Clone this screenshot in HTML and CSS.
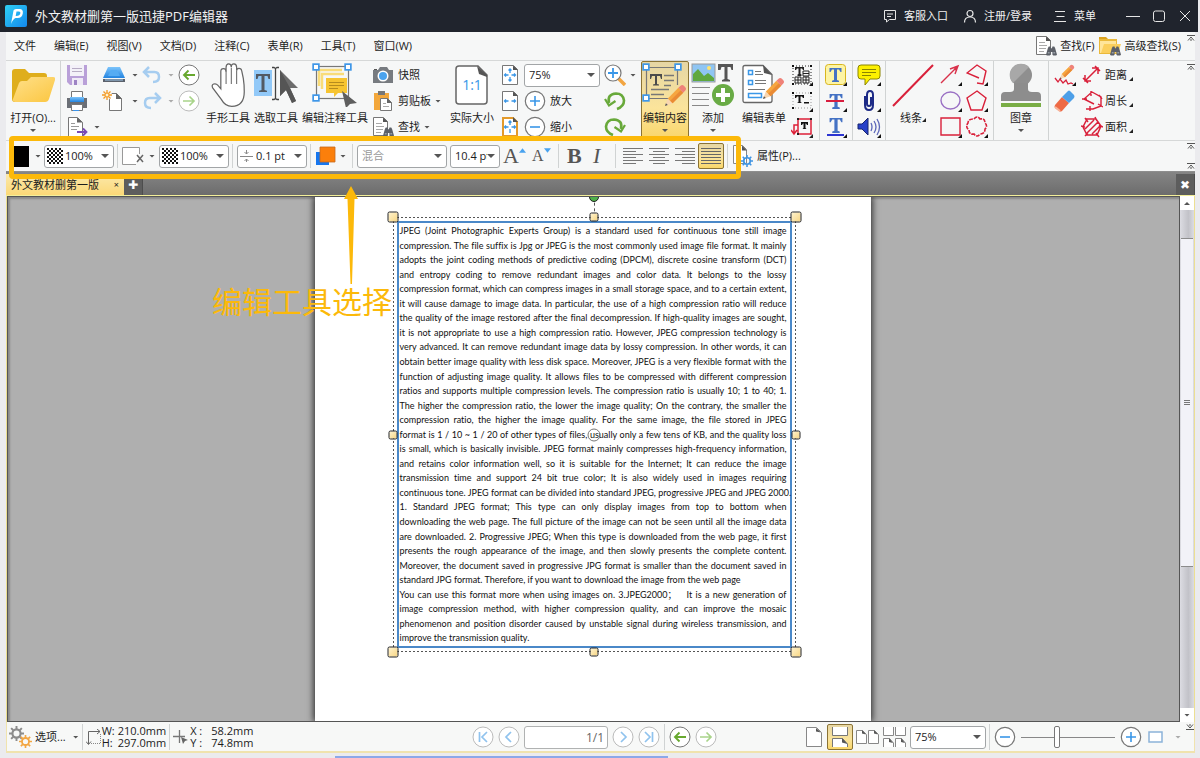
FILE: index.html
```html
<!DOCTYPE html>
<html lang="zh-CN">
<head>
<meta charset="utf-8">
<title>外文教材删第一版迅捷PDF编辑器</title>
<link rel="stylesheet" href="styles.css">
</head>
<body>
<svg class="sprite" aria-hidden="true">
  <defs>
    <linearGradient id="gBlue" x1="0" y1="0" x2="0" y2="1"><stop offset="0" stop-color="#7cc4fb"/><stop offset="1" stop-color="#2384e0"/></linearGradient>
    <linearGradient id="gFold" x1="0" y1="0" x2="1" y2="1"><stop offset="0" stop-color="#ffe08a"/><stop offset="1" stop-color="#fbc640"/></linearGradient>
    <linearGradient id="gLogo" x1="0" y1="0" x2="1" y2="1"><stop offset="0" stop-color="#2fd0f5"/><stop offset="1" stop-color="#1388ee"/></linearGradient>
    <pattern id="chk" width="4" height="4" patternUnits="userSpaceOnUse"><rect width="4" height="4" fill="#fff"/><path d="M0 0h2v2h-2zM2 2h2v2h-2z" fill="#111"/></pattern>
  </defs>
  <symbol id="logo" viewBox="0 0 22 22"><rect width="22" height="22" rx="2" fill="url(#gLogo)"/><path d="M6 19 8.500 5.500Q9 4 11 4h3.500q4 0 3.300 4.500Q17 13 12.500 13H10.500Q8 14 6 19zM11.500 6.500 10.700 11q4.300.2 4.700-3 .2-1.500-1.400-1.500z" fill="#fff" fill-rule="evenodd"/></symbol>
  <symbol id="chat" viewBox="0 0 14 14"><path d="M1.500 1.500h11v9h-6l-3 2.500v-2.500h-2zM4 5h6M4 7.500h4" fill="none" stroke="#e6e6e6"/></symbol>
  <symbol id="user" viewBox="0 0 14 14"><circle cx="7" cy="4.500" r="3" fill="none" stroke="#e6e6e6" stroke-width="1.200"/><path d="M1.500 13.500q0-5.500 5.500-5.500t5.500 5.500" fill="none" stroke="#e6e6e6" stroke-width="1.200"/></symbol>
  <symbol id="burger" viewBox="0 0 14 14"><path d="M2 2.500h10M3.500 7.500h8M1 12.500h12" stroke="#e6e6e6"/></symbol>
  <symbol id="min" viewBox="0 0 14 14"><path d="M0 7.500h14" stroke="#e6e6e6"/></symbol>
  <symbol id="max" viewBox="0 0 14 14"><rect x="1.500" y="2" width="11" height="10.500" rx="2" fill="none" stroke="#e6e6e6"/></symbol>
  <symbol id="close" viewBox="0 0 14 14"><path d="M2 2l10 10M12 2 2 12" stroke="#e6e6e6"/></symbol>

  <symbol id="bino" viewBox="0 0 12 10"><path d="M0 9 2 2l1-2h2l.5 2h1L7 0h2l1 2 2 7-1 1H8L7 9V6H5v3l-1 1H1z" fill="#5c6068"/><path d="M2 7h2M8 7h2" stroke="#b9c3cc"/></symbol>
  <symbol id="docfind" viewBox="0 0 22 20"><path d="M1.500.5h10l4 4v14h-14z" fill="#fff" stroke="#777"/><path d="M11 .5v4.500h5z" fill="#555"/><path d="M4 6.500h6M4 9.500h8M4 12.500h7M4 15.500h5" stroke="#a9a9a9"/><use href="#bino" x="11" y="10" width="11" height="10"/></symbol>
  <symbol id="foldfind" viewBox="0 0 22 20"><path d="M0 1h7l2 2h9v4H0z" fill="#dba21f"/><path d="M0 3h18v15H0z" fill="#eab93a"/><path d="M1 5h16v12H1z" fill="#ffe59a"/><path d="M5 8h17l-3 9H2z" fill="#fbcf5d"/><use href="#bino" x="11" y="10" width="11" height="10"/></symbol>
  <symbol id="pull" viewBox="0 0 8 6"><path d="M0 .5h8M1 5.500 4 2l3 3.500M3 5h2" fill="none" stroke="#555"/></symbol>

  <symbol id="folder" viewBox="0 0 44 44"><path d="M1 9q0-3 3-3h10l4 4h15q3 0 3 3v20L4 39q-3 0-3-3z" fill="#dfae1c"/><path d="M8 20q1-2 3-2h5l4-4h22q3 0 2 3l-6 19q-1 3-4 3H4q-3-1-2-3z" fill="url(#gFold)"/></symbol>
  <symbol id="save" viewBox="0 0 22 22"><path d="M1 1h20v20H4l-3-3z" fill="#b9a0d8"/><path d="M4 1h14v11H4z" fill="#f3f1f8"/><path d="M6 4.500h10M6 7.500h10" stroke="#b7acc4"/><path d="M6 14h11v7H6z" fill="#efeaf6"/><path d="M8 16h3v5H8z" fill="#9d83c4"/></symbol>
  <symbol id="print" viewBox="0 0 22 22"><path d="M5.500 1.500h11v8h-11z" fill="#fff" stroke="#777"/><path d="M1 8h20v10H1z" fill="#6b6f76"/><path d="M4 7h14v5H4z" fill="url(#gBlue)"/><path d="M5.500 14.500h11v6h-11z" fill="#fff" stroke="#777"/><path d="M7 20.500h6" stroke="#3b92e8"/></symbol>
  <symbol id="export" viewBox="0 0 22 22"><path d="M2.500 1.500h9l5 5v14h-14z" fill="#fff" stroke="#777"/><path d="M11 1.500v5h6z" fill="#666"/><path d="M5 7.500h4M5 10.500h8M5 13.500h6" stroke="#999"/><path d="M11 16h9M17 12.500l3.500 3.500-3.500 3.500" fill="none" stroke="#7a4bb5" stroke-width="1.800"/></symbol>
  <symbol id="scan" viewBox="0 0 24 18"><path d="M6 1h12l5 11H1z" fill="url(#gBlue)"/><path d="M9 4h6l3 6H6z" fill="#56acf3"/><path d="M1 13h22v3H1z" fill="#5b616b"/><path d="M3 14h18" stroke="#9fc9ee"/></symbol>
  <symbol id="newdoc" viewBox="0 0 24 22"><path d="M7.500 3.500h7l5 5v12h-12z" fill="#fff" stroke="#777"/><path d="M14 3v6h6z" fill="#666"/><circle cx="5" cy="5" r="5" fill="#f6f7f7"/><path d="M5 0v10M0 5h10M1.500 1.500l7 7M8.500 1.500l-7 7" stroke="#f49a25" stroke-width="1.300"/><circle cx="5" cy="5" r="2" fill="#fff3d0" stroke="#f49a25"/></symbol>
  <symbol id="undo" viewBox="0 0 20 18"><path d="M2 6h10.500q4.500 0 4.500 5 0 5-6 5M7 1 2 6l5 5" fill="none" stroke="#a6cdf0" stroke-width="2.500"/></symbol>
  <symbol id="redo" viewBox="0 0 20 18"><path d="M18 6H7.500Q3 6 3 11q0 5 6 5M13 1l5 5-5 5" fill="none" stroke="#a6cdf0" stroke-width="2.500"/></symbol>
  <symbol id="goback" viewBox="0 0 22 22"><circle cx="11" cy="11" r="10" fill="#fff" stroke="#777"/><path d="M17 11H6M10.500 6.500 6 11l4.500 4.500" fill="none" stroke="#68a92f" stroke-width="1.900"/></symbol>
  <symbol id="gofwd" viewBox="0 0 22 22"><circle cx="11" cy="11" r="10" fill="#fff" stroke="#bbb"/><path d="M5 11h11M11.500 6.500 16 11l-4.500 4.500" fill="none" stroke="#a9d48a" stroke-width="1.700"/></symbol>

  <symbol id="hand" viewBox="0 0 36 46"><path d="M10.500 27V9q0-3 2.700-3T16 9V4.500Q16 1 18.700 1t2.800 3.500V4q0-3 2.700-3T27 4.500V8q0-2.500 2.500-2.500T32.300 8l1.700 8q1 6 1 14 0 15-13 15.300-7 0-11-7.300L2 26q-1.500-3 1-4t4.500 1.500z" fill="#fff" stroke="#666" stroke-width="1.300"/><path d="M16 8v14M21.500 5v17M27 8v14" fill="none" stroke="#777" stroke-width="1.200"/></symbol>
  <symbol id="select" viewBox="0 0 46 44"><rect x="1" y="7" width="18" height="26" fill="#92c9f8"/><path d="M3 11h14v5h-1.500l-1-3H11.500v14l2.500.8V29H6v-1.200l2.500-.8V13H5.500l-1 3H3z" fill="#525a64"/><path d="M19 4.500h2l1.500 1 1.500-1h2M22.500 5v31M19 36.500h2l1.500-1 1.500 1h2" fill="none" stroke="#444" stroke-width="1.300"/><path d="M27 7l18 18h-8l6 13-4 2-6-13-6 6z" fill="#6c6c6c"/><path d="M27 7l10 18 6 13-4 2-6-13-6 6z" fill="#555"/></symbol>
  <symbol id="handle" viewBox="0 0 7 7"><rect x="1" y="1" width="5" height="5" fill="#fff" stroke="#3f97e8" stroke-width="1.500"/></symbol>
  <symbol id="annot" viewBox="0 0 46 44"><rect x="4.500" y="3.500" width="32" height="32" fill="none" stroke="#777" stroke-width="1.200"/><path d="M7 23V7h23M10 26V11h22" fill="none" stroke="#f9dc79" stroke-width="2.500"/><path d="M14 15h21v15h-9l-4 4v-4h-8z" fill="#f6c431"/><path d="M17 19.500h15M17 22.500h15M17 25.500h9" stroke="#b58c1e"/><use href="#handle" x="0" y="0" width="8" height="8"/><use href="#handle" x="32" y="0" width="8" height="8"/><use href="#handle" x="0" y="31" width="8" height="8"/><path d="M30 28l15 12-7 1-4 4z" fill="#5e5e5e"/></symbol>
  <symbol id="camera" viewBox="0 0 22 18"><path d="M1 4h5l2-3h7l2 3h4v13H1z" fill="#777b80"/><circle cx="11" cy="10" r="5.500" fill="#fff"/><circle cx="11" cy="10" r="4" fill="#4aa3ef"/><path d="M2 3h3v1H2z" fill="#555"/></symbol>
  <symbol id="clip" viewBox="0 0 22 22"><path d="M2 3h15v17H2z" fill="#f3a73b"/><path d="M6 1h7v4H6z" fill="#777"/><path d="M8.500 8.500h7l4 4v8h-11z" fill="#fff" stroke="#777"/><path d="M15 8v5h5z" fill="#666"/><path d="M11 13.500h3M11 16.500h6" stroke="#aaa"/></symbol>
  <symbol id="fitpage" viewBox="0 0 16 20"><path d="M.5.5h11l4 4v15H.500z" fill="#fff" stroke="#777"/><path d="M11 .5v4.500h5z" fill="#555"/><path d="M8 4v4M8 12v4M2.500 10h4M9.500 10h4M6.500 5.500 8 4l1.500 1.500M6.500 14.500 8 16l1.500-1.500M4 8.500 2.500 10 4 11.500M12 8.500l1.500 1.500-1.500 1.500" fill="none" stroke="#3a97e8" stroke-width="1.300"/></symbol>
  <symbol id="fitwidth" viewBox="0 0 16 20"><path d="M.5.5h11l4 4v15H.500z" fill="#fff" stroke="#777"/><path d="M11 .5v4.500h5z" fill="#555"/><path d="M2.500 10h4M9.500 10h4M4 8.500 2.500 10 4 11.500M12 8.500l1.500 1.500-1.500 1.500" fill="none" stroke="#3a97e8" stroke-width="1.300"/></symbol>
  <symbol id="fitvis" viewBox="0 0 16 20"><path d="M1 1h10l4 4v14H1z" fill="#fff" stroke="#e39a2b" stroke-width="2"/><path d="M11 0v5h5z" fill="#555"/><path d="M8 4v4M8 12v4M2.500 10h4M9.500 10h4M6.500 5.500 8 4l1.500 1.500M4 8.500 2.500 10 4 11.500M12 8.500l1.500 1.500-1.500 1.500" fill="none" stroke="#3a97e8" stroke-width="1.300"/></symbol>
  <symbol id="plus" viewBox="0 0 22 22"><circle cx="11" cy="11" r="9.700" fill="#fff" stroke="#777" stroke-width="1.200"/><path d="M11 6v10M6 11h10" stroke="#3a97e8" stroke-width="1.600"/></symbol>
  <symbol id="minus" viewBox="0 0 22 22"><circle cx="11" cy="11" r="9.700" fill="#fff" stroke="#777" stroke-width="1.200"/><path d="M6 11h10" stroke="#3a97e8" stroke-width="1.600"/></symbol>
  <symbol id="magnify" viewBox="0 0 22 22"><path d="M14 14l7 7" stroke="#f2a541" stroke-width="3.500"/><circle cx="9" cy="9" r="8" fill="#fff" stroke="#777" stroke-width="1.200"/><path d="M9 4v10M4 9h10" stroke="#3a97e8" stroke-width="1.800"/></symbol>
  <symbol id="rotl" viewBox="0 0 22 20"><path d="M5 12Q3 3 12 2.500q7 0 8 7 0 6-7 8.500" fill="none" stroke="#68a93a" stroke-width="2.600"/><path d="M1 8l4 6.500L11.500 10" fill="none" stroke="#68a93a" stroke-width="2.200"/></symbol>
  <symbol id="pencil" viewBox="0 0 24 24"><path d="M1 23 4 15l5 5z" fill="#f8d6b0"/><path d="M1 23l1-3 2 2z" fill="#555"/><path d="M4 15 15 4l5 5L9 20z" fill="#f6a640"/><path d="M6.500 17.500 17.500 6.500l2.500 2.500L9 20z" fill="#ea8b35"/><path d="M15 4l2-2q2-2 4 0l1 1q2 2 0 4l-2 2z" fill="#ef8279"/></symbol>
  <symbol id="editc" viewBox="0 0 46 44"><path d="M4.500 32V4.500h31V22M4.500 35.500h22" fill="none" stroke="#777" stroke-width="1.200"/><path d="M8 11h12v5h-1l-1-3h-3v8l2 .6v1h-6v-1l2-.6v-8h-3l-1 3H8z" fill="#4b4b4b"/><path d="M22 12.500h10M22 17.500h10M22 22.500h7M9 26.500h18M9 31.500h13" stroke="#777" stroke-width="1.300"/><use href="#handle" x="0" y="0" width="8" height="8"/><use href="#handle" x="32" y="0" width="8" height="8"/><use href="#handle" x="0" y="31" width="8" height="8"/><use href="#pencil" x="22" y="21" width="23" height="23"/></symbol>
  <symbol id="add" viewBox="0 0 44 44"><rect x="1" y="1" width="23" height="18" fill="#8fc5f3" stroke="#9a9a9a"/><path d="M2 18V11l5-5 6 7 4-3 6 5v3z" fill="#5fa83e"/><circle cx="18" cy="5" r="2" fill="#ffe36e"/><path d="M27 1h15v6h-1.500l-1-3H36.500v12l2.500 1v1.500h-8V17l2.500-1V4h-3l-1 3H27z" fill="#555"/><path d="M1 24.500h18M1 30.500h17M1 36.500h17M1 42.500h17" stroke="#888"/><circle cx="32" cy="32" r="11" fill="#69ab45"/><path d="M32 25v14M25 32h14" stroke="#fff" stroke-width="4"/></symbol>
  <symbol id="form" viewBox="0 0 44 44"><path d="M3 2.500h18l9 9v26q0 2-2 2H3q-2 0-2-2v-33q0-2 2-2z" fill="#fff" stroke="#666" stroke-width="1.300"/><path d="M21 2l9 10-8-2z" fill="#555"/><path d="M6.500 7.500h4v4h-4zM6.500 17.500h4v4h-4zM6.500 30.500h13v4h-13z" fill="none" stroke="#3a97e8" stroke-width="1.500"/><path d="M13 8.500h6M13 11.500h8M13 17.500h11M13 20.500h11M6 26.500h17" stroke="#777"/><use href="#pencil" x="20" y="14" width="23" height="23"/></symbol>
  <symbol id="tsel1" viewBox="0 0 22 22"><rect x="2" y="2" width="18" height="18" fill="none" stroke="#222" stroke-dasharray="1 2"/><path d="M4 3h9v3h-1l-1-1.500H9.500V10l1 .6V12h-4v-1.400l1-.6V4.500H6L5 6H4z" fill="#222"/><path d="M12 7h6v5h-6zM4 13h6v6H4zM12 13h6v6h-6z" fill="none" stroke="#222"/><path d="M4 16h6M7 13v6M12 9.500h6M12 16h6M15 13v6" stroke="#222"/><path d="M1 1h2v2H1zM19 1h2v2h-2zM1 19h2v2H1zM22 18v4h-4z" fill="#111"/></symbol>
  <symbol id="tsel2" viewBox="0 0 22 22"><path d="M2 3h18v15H2z" fill="none" stroke="#999" stroke-dasharray="1 2"/><path d="M4 5h9v3h-1l-1-1.500H9.500V12l1.500 1H6l1.500-1V6.500H6L5 8H4zM13 12h5v1.500h-5z" fill="#111"/><path d="M1 2h2v2H1zM19 2h2v2h-2zM1 17h2v2H1zM22 18v4h-4z" fill="#111"/></symbol>
  <symbol id="tsel3" viewBox="0 0 22 22"><path d="M7 3h13v15H7zM7 9H3v9M0 14l3 4 3-4" fill="none" stroke="#dd2038" stroke-width="1.500"/><path d="M10 6h7v3h-1l-1-1.500h-.500V12l1 1h-4l1-1V7.500H12L11 9h-1z" fill="#111"/><path d="M6 2h2v2H6zM19 2h2v2h-2zM6 17h2v2H6zM22 18v4h-4z" fill="#222"/></symbol>
  <symbol id="tglyph" viewBox="0 0 12 14"><path d="M0 0h12v4h-1l-1.500-2.500H7.500V12l2 .7V14h-7v-1.300l2-.7V1.500h-2L1 4H0z" fill="#4472c4"/></symbol>
  <symbol id="thigh" viewBox="0 0 22 22"><rect x=".5" y=".5" width="20" height="20" rx="3" fill="#fdf4a4" stroke="#d8b51e"/><use href="#tglyph" x="4" y="4" width="13" height="14"/><path d="M22 18v4h-4z" fill="#111"/></symbol>
  <symbol id="tstrike" viewBox="0 0 22 22"><use href="#tglyph" x="4" y="4" width="14" height="15"/><path d="M1 11h18" stroke="#d81e3f" stroke-width="2"/><path d="M22 18v4h-4z" fill="#111"/></symbol>
  <symbol id="tunder" viewBox="0 0 22 22"><use href="#tglyph" x="4" y="2" width="14" height="15"/><path d="M2 19h17" stroke="#2c35d2" stroke-width="2"/><path d="M22 18v4h-4z" fill="#111"/></symbol>
  <symbol id="note" viewBox="0 0 24 22"><path d="M4 1h16q3 0 3 3v8q0 3-3 3h-7l-5 6v-6H4q-3 0-3-3V4q0-3 3-3z" fill="#fdf000" stroke="#8a8400"/><path d="M5 5.500h14M5 8.500h14M5 11.500h9" stroke="#8a8400"/><path d="M24 18v4h-4z" fill="#111"/></symbol>
  <symbol id="attach" viewBox="0 0 24 22"><path d="M8 6v9q0 5 4 5t4-5V5q0-4-3-4T10 5v9q0 2 2 2t2-2V7" fill="none" stroke="#1c2a86" stroke-width="2"/><path d="M24 18v4h-4z" fill="#111"/></symbol>
  <symbol id="sound" viewBox="0 0 24 22"><path d="M1 8h4l6-6v17l-6-6H1z" fill="#2740c8" stroke="#17246f"/><path d="M14 7q2 4 0 8M17 5q4 6 0 12M20 3q5 8 0 16" fill="none" stroke="#5b66b8" stroke-width="1.300"/><path d="M24 18v4h-4z" fill="#111"/></symbol>
  <symbol id="line" viewBox="0 0 42 44"><path d="M1 43 41 2" stroke="#d9203a" stroke-width="2"/></symbol>
  <symbol id="arrow" viewBox="0 0 22 22"><path d="M1 19 17 3M10 5l8-3-3 8M14 3l2 3" fill="none" stroke="#d9304a" stroke-width="1.400"/><path d="M22 18v4h-4z" fill="#111"/></symbol>
  <symbol id="ellipse" viewBox="0 0 22 22"><ellipse cx="10.500" cy="10.500" rx="9.500" ry="8.500" fill="none" stroke="#9a70c4" stroke-width="1.400"/><path d="M22 18v4h-4z" fill="#111"/></symbol>
  <symbol id="rect" viewBox="0 0 22 22"><path d="M1 2h19v17H1z" fill="none" stroke="#d9203a" stroke-width="1.400"/><path d="M22 18v4h-4z" fill="#111"/></symbol>
  <symbol id="polyline" viewBox="0 0 22 22"><path d="M13 14 1 9l10-8 9 6-3 13-6-1" fill="none" stroke="#d9203a" stroke-width="1.400"/><path d="M22 18v4h-4z" fill="#111"/></symbol>
  <symbol id="polygon" viewBox="0 0 22 22"><path d="M11 1 20 8l-4 12H5L1 8z" fill="none" stroke="#d9203a" stroke-width="1.400"/><path d="M22 18v4h-4z" fill="#111"/></symbol>
  <symbol id="cloud" viewBox="0 0 22 22"><path d="M8 3q3-4 6 0 5-1 5 4 3 3 0 6 0 5-5 5-3 4-6 0-5 1-5-4-4-3-1-7 0-4 6-4z" fill="none" stroke="#d9203a" stroke-width="1.600" stroke-dasharray="4 1"/><path d="M22 18v4h-4z" fill="#111"/></symbol>
  <symbol id="stamp" viewBox="0 0 42 44"><circle cx="21" cy="12" r="11" fill="#8f8f8f"/><path d="M14 20h14v6q0 3 4 3h5q4 0 4 4v5H1v-5q0-4 4-4h5q4 0 4-3z" fill="#8d8d8d"/><path d="M13 20 29 4A11 11 0 0 0 13 20z" fill="#a8a8a8"/><path d="M1 40h40v4H1z" fill="#79ad45"/></symbol>
  <symbol id="scribble" viewBox="0 0 22 22"><use href="#pencil" x="5" y="0" width="16" height="16"/><path d="M1 14l3 4 2-3 3 4 3-3 2 4 3-1 2 1" fill="none" stroke="#d9203a" stroke-width="1.300"/><path d="M22 18v4h-4z" fill="#111"/></symbol>
  <symbol id="eraser" viewBox="0 0 22 22"><path d="M1 15 8 7l7 6-7 8q-2 1-3 0l-4-3q-1-1 0-3z" fill="#ee6a45"/><path d="M8 7l6-6q1-1 2 0l4 4q1 1 0 3l-5 5z" fill="#4d9fe8"/><path d="M1 17l5 4" stroke="#f8b49a" stroke-width="2"/></symbol>
  <symbol id="dist" viewBox="0 0 22 22"><path d="M4 17 17 4M4 11v6h6M17 10V4h-6M2 14l5 5M14 2l5 5" fill="none" stroke="#d9203a" stroke-width="1.500"/></symbol>
  <symbol id="perim" viewBox="0 0 22 22"><path d="M13 14 3 9l8-7 9 5v9l-8 3H5M1 9h5M10 1v5M18 5l3 4M9 16v5M17 14l5 3" fill="none" stroke="#d9203a" stroke-width="1.400"/></symbol>
  <symbol id="area" viewBox="0 0 22 22"><path d="M6 3h9l5 7-4 9H6L2 11zM4 13l9-9M6 17 17 6M11 18l8-8M4 2l3 4M14 1l2 4M18 9l4 2M15 17l3 4M4 20l3-3M0 10l4 1" fill="none" stroke="#d9203a" stroke-width="1.500"/></symbol>

  <symbol id="checker" viewBox="0 0 16 16"><rect width="16" height="16" fill="url(#chk)"/></symbol>
  <symbol id="nofill" viewBox="0 0 24 20"><path d="M17.500 8V1.500H.500v17H14" fill="#fff" stroke="#999"/><path d="M15 9l6 7M21 9l-6 7" stroke="#666" stroke-width="1.500"/></symbol>
  <symbol id="weight" viewBox="0 0 14 12"><path d="M0 6.500h13M6.500 0v4M4.500 2l2 2 2-2M6.500 12V9M4.500 11l2-2 2 2" fill="none" stroke="#888"/></symbol>
  <symbol id="colors" viewBox="0 0 22 20"><path d="M1 6h13v13H1z" fill="#1676ee"/><path d="M5 1h15v15H5z" fill="#fb7f0b" stroke="#c76a1e" stroke-width=".8"/></symbol>
  <symbol id="tup" viewBox="0 0 8 5"><path d="M0 5 4 0l4 5z" fill="#4aa3ef"/></symbol>
  <symbol id="tdown" viewBox="0 0 8 5"><path d="M0 0h8L4 5z" fill="#4aa3ef"/></symbol>
  <symbol id="aleft" viewBox="0 0 20 16"><path d="M0 .5h20M0 3.500h13M0 6.500h20M0 9.500h13M0 12.500h20M0 15.500h13" stroke="#777"/></symbol>
  <symbol id="acenter" viewBox="0 0 20 16"><path d="M0 .5h20M4 3.500h12M0 6.500h20M4 9.500h12M0 12.500h20M4 15.500h12" stroke="#777"/></symbol>
  <symbol id="aright" viewBox="0 0 20 16"><path d="M0 .5h20M7 3.500h13M0 6.500h20M7 9.500h13M0 12.500h20M7 15.500h13" stroke="#777"/></symbol>
  <symbol id="ajust" viewBox="0 0 20 16"><path d="M0 .5h20M0 3.500h20M0 6.500h20M0 9.500h20M0 12.500h20M0 15.500h20" stroke="#666"/></symbol>
  <symbol id="gear" viewBox="0 0 14 14"><circle cx="7" cy="7" r="3.800" fill="none" stroke="currentColor" stroke-width="2"/><path d="M7 0v3M7 11v3M0 7h3M11 7h3M2 2l2 2M10 10l2 2M12 2l-2 2M4 10l-2 2" stroke="currentColor" stroke-width="1.800"/></symbol>
  <symbol id="props" viewBox="0 0 22 22"><path d="M1.500.5h9l4 4v14h-13z" fill="#fff" stroke="#888"/><path d="M10 .5v5h5z" fill="#555"/><path d="M4 6.500h5M4 9.500h5M4 12.500h4" stroke="#aaa"/><g color="#3f94e2"><use href="#gear" x="9" y="10" width="12" height="12"/></g></symbol>
  <symbol id="gears" viewBox="0 0 24 22"><g color="#8c8c8c"><use href="#gear" x="0" y="0" width="15" height="15"/></g><g color="#f3a642"><use href="#gear" x="10" y="9" width="13" height="13"/></g></symbol>
  <symbol id="whsize" viewBox="0 0 16 16"><path d="M2.500 15V2.500H14M0 12.500l2.500 3 2.500-3M11 0l3 2.500-3 2.500" fill="none" stroke="#666"/><path d="M5 14.500h9.500V5" fill="none" stroke="#888" stroke-dasharray="1 1"/></symbol>
  <symbol id="cross" viewBox="0 0 16 16"><path d="M0 7.500h12M6.500 1v13" stroke="#777" stroke-width="1.300"/><path d="M8 8l7 3-3 1-2 3z" fill="#666"/></symbol>
  <symbol id="first" viewBox="0 0 22 22"><circle cx="11" cy="11" r="10" fill="#fff" stroke="#bbb"/><path d="M7.500 6v10M15 6l-5 5 5 5" fill="none" stroke="#90c3ee" stroke-width="1.700"/></symbol>
  <symbol id="prev" viewBox="0 0 22 22"><circle cx="11" cy="11" r="10" fill="#fff" stroke="#bbb"/><path d="M13 6l-5 5 5 5" fill="none" stroke="#90c3ee" stroke-width="1.700"/></symbol>
  <symbol id="next" viewBox="0 0 22 22"><circle cx="11" cy="11" r="10" fill="#fff" stroke="#bbb"/><path d="M9 6l5 5-5 5" fill="none" stroke="#90c3ee" stroke-width="1.700"/></symbol>
  <symbol id="last" viewBox="0 0 22 22"><circle cx="11" cy="11" r="10" fill="#fff" stroke="#bbb"/><path d="M14.500 6v10M7 6l5 5-5 5" fill="none" stroke="#90c3ee" stroke-width="1.700"/></symbol>
  <symbol id="single" viewBox="0 0 16 20"><path d="M.5.5h10l5 5v14H.500z" fill="#fff" stroke="#888"/><path d="M10 1v3.500l5 1z" fill="#555"/></symbol>
  <symbol id="cont" viewBox="0 0 16 20"><path d="M.5 0v8.500h15V0M15.500 20v-3l-5-5.500H.500V20" fill="#fff" stroke="#777"/><path d="M10 11v4.500l5.500 1.500z" fill="#555"/></symbol>
  <symbol id="facing" viewBox="0 0 24 20"><path d="M.5 3.500h6l4 4v9H.500zM12.500 3.500h6l4 4v9h-10z" fill="#fff" stroke="#888"/><path d="M6 3v3.500l4 1zM18 3v3.500l4 1z" fill="#555"/></symbol>
  <symbol id="contfacing" viewBox="0 0 24 20"><path d="M.5 0v8.500h10V0M10.500 20v-4l-4-4.500h-6V20M12.500 0v8.500h10V0M22.500 20v-4l-4-4.500h-6V20" fill="#fff" stroke="#888"/><path d="M6 11v4l4 1zM18 11v4l4 1z" fill="#555"/></symbol>
  <symbol id="screen" viewBox="0 0 16 12"><path d="M1 1h13v10H1z" fill="#fff" stroke="#8cb3d9" stroke-width="1.500"/></symbol>
</svg>

<header class="titlebar">
  <svg class="i22"><use href="#logo"/></svg>
  <h1>外文教材删第一版迅捷PDF编辑器</h1>
  <nav class="account">
    <button><svg class="i14"><use href="#chat"/></svg>客服入口</button>
    <button><svg class="i14"><use href="#user"/></svg>注册/登录</button>
    <button class="menu"><svg class="i14"><use href="#burger"/></svg>菜单</button>
  </nav>
  <div class="winctl">
    <button aria-label="最小化"><svg class="i14"><use href="#min"/></svg></button>
    <button aria-label="最大化"><svg class="i14"><use href="#max"/></svg></button>
    <button aria-label="关闭"><svg class="i14"><use href="#close"/></svg></button>
  </div>
</header>

<div class="window">
  <div class="menubar">
    <button>文件</button><button>编辑(E)</button><button>视图(V)</button><button>文档(D)</button><button>注释(C)</button><button>表单(R)</button><button>工具(T)</button><button>窗口(W)</button>
    <div class="finders">
      <button><svg class="i22"><use href="#docfind"/></svg>查找(F)</button>
      <button><svg class="i22"><use href="#foldfind"/></svg>高级查找(S)</button>
    </div>
    <svg class="pull"><use href="#pull"/></svg>
  </div>

  <div class="ribbon">
    <button class="big w54"><svg class="i44"><use href="#folder"/></svg>打开(O)...<i class="caret"></i></button>
    <i class="sep"></i>
    <div class="cells quick">
      <button aria-label="保存"><svg class="i22"><use href="#save"/></svg></button>
      <button aria-label="扫描"><svg class="i24"><use href="#scan"/></svg><i class="caret"></i></button>
      <button aria-label="撤销"><svg class="i20"><use href="#undo"/></svg><i class="caret dim"></i></button>
      <button aria-label="后退"><svg class="i22"><use href="#goback"/></svg></button>
      <button aria-label="打印"><svg class="i22"><use href="#print"/></svg></button>
      <button aria-label="新建"><svg class="i24"><use href="#newdoc"/></svg><i class="caret"></i></button>
      <button aria-label="重做"><svg class="i20"><use href="#redo"/></svg><i class="caret dim"></i></button>
      <button aria-label="前进"><svg class="i22"><use href="#gofwd"/></svg></button>
      <button class="span2" aria-label="导出"><svg class="i22"><use href="#export"/></svg><i class="caret"></i></button>
    </div>
    <button class="big w48"><svg class="i44"><use href="#hand"/></svg>手形工具</button>
    <button class="big w48"><svg class="i46"><use href="#select"/></svg>选取工具</button>
    <button class="big w70"><svg class="i46"><use href="#annot"/></svg>编辑注释工具</button>
    <div class="cells one w78">
      <button><svg class="i22"><use href="#camera"/></svg>快照</button>
      <button><svg class="i22"><use href="#clip"/></svg>剪贴板<i class="caret"></i></button>
      <button><svg class="i22"><use href="#docfind"/></svg>查找<i class="caret"></i></button>
    </div>
    <button class="big w48">
      <svg class="i44" viewBox="0 0 44 44"><path d="M9 3h19l9 9v26q0 3-3 3H9q-3 0-3-3V6q0-3 3-3z" fill="#fff" stroke="#666" stroke-width="1.500"/><path d="M27 3l10 9v2l-8-3z" fill="#555"/><text class="ratio" x="22" y="27" text-anchor="middle">1:1</text></svg>
      实际大小</button>
    <div class="cells zoomers">
      <button aria-label="适合页面"><svg class="i20"><use href="#fitpage"/></svg></button>
      <div class="combo"><select aria-label="缩放"><option>75%</option></select><i class="caret"></i></div>
      <button aria-label="缩放工具"><svg class="i22"><use href="#magnify"/></svg><i class="caret"></i></button>
      <button aria-label="适合宽度"><svg class="i20"><use href="#fitwidth"/></svg></button>
      <button><svg class="i22"><use href="#plus"/></svg>放大</button>
      <button aria-label="逆时针旋转"><svg class="i22"><use href="#rotl"/></svg></button>
      <button aria-label="适合可见"><svg class="i20"><use href="#fitvis"/></svg></button>
      <button><svg class="i22"><use href="#minus"/></svg>缩小</button>
      <button aria-label="顺时针旋转"><svg class="i22 flip"><use href="#rotl"/></svg></button>
    </div>
    <button class="big w48 active"><svg class="i46"><use href="#editc"/></svg>编辑内容<i class="caret"></i></button>
    <button class="big w48"><svg class="i44"><use href="#add"/></svg>添加<i class="caret"></i></button>
    <button class="big w54"><svg class="i44"><use href="#form"/></svg>编辑表单</button>
    <div class="cells one w28">
      <button aria-label="全部文本"><svg class="i22"><use href="#tsel1"/></svg></button>
      <button aria-label="文本框"><svg class="i22"><use href="#tsel2"/></svg></button>
      <button aria-label="链接文本"><svg class="i22"><use href="#tsel3"/></svg></button>
    </div>
    <i class="sep"></i>
    <div class="cells one w32">
      <button aria-label="高亮"><svg class="i22"><use href="#thigh"/></svg></button>
      <button aria-label="删除线"><svg class="i22"><use href="#tstrike"/></svg></button>
      <button aria-label="下划线"><svg class="i22"><use href="#tunder"/></svg></button>
    </div>
    <i class="sep"></i>
    <div class="cells one w32">
      <button aria-label="注释"><svg class="i24"><use href="#note"/></svg></button>
      <button aria-label="附件"><svg class="i24"><use href="#attach"/></svg></button>
      <button aria-label="声音"><svg class="i24"><use href="#sound"/></svg></button>
    </div>
    <i class="sep"></i>
    <button class="big w54"><svg class="i44"><use href="#line"/></svg><span>线条<i class="corner"></i></span></button>
    <div class="cells two">
      <button aria-label="箭头"><svg class="i22"><use href="#arrow"/></svg></button>
      <button aria-label="折线"><svg class="i22"><use href="#polyline"/></svg></button>
      <button aria-label="椭圆"><svg class="i22"><use href="#ellipse"/></svg></button>
      <button aria-label="多边形"><svg class="i22"><use href="#polygon"/></svg></button>
      <button aria-label="矩形"><svg class="i22"><use href="#rect"/></svg></button>
      <button aria-label="云形"><svg class="i22"><use href="#cloud"/></svg></button>
    </div>
    <i class="sep"></i>
    <button class="big w54"><svg class="i44"><use href="#stamp"/></svg>图章<i class="caret"></i></button>
    <i class="sep"></i>
    <div class="cells one w32">
      <button aria-label="铅笔"><svg class="i22"><use href="#scribble"/></svg></button>
      <button aria-label="橡皮"><svg class="i22"><use href="#eraser"/></svg></button>
    </div>
    <div class="cells one w58">
      <button><svg class="i22"><use href="#dist"/></svg>距离<i class="corner"></i></button>
      <button><svg class="i22"><use href="#perim"/></svg>周长<i class="corner"></i></button>
      <button><svg class="i22"><use href="#area"/></svg>面积<i class="corner"></i></button>
    </div>
    <svg class="pull"><use href="#pull"/></svg>
  </div>

  <div class="formatbar">
    <button class="swatch" aria-label="描边颜色"><b></b><i class="caret"></i></button>
    <div class="combo c70"><svg class="i16"><use href="#checker"/></svg><select aria-label="描边不透明度"><option>100%</option></select><i class="caret"></i></div>
    <i class="sep"></i>
    <button class="pick" aria-label="填充颜色"><svg class="i24"><use href="#nofill"/></svg><i class="caret"></i></button>
    <div class="combo c70"><svg class="i16"><use href="#checker"/></svg><select aria-label="填充不透明度"><option>100%</option></select><i class="caret"></i></div>
    <i class="sep"></i>
    <div class="combo c70"><svg class="i14"><use href="#weight"/></svg><select aria-label="线宽"><option>0.1 pt</option></select><i class="caret"></i></div>
    <i class="sep"></i>
    <button class="pick" aria-label="文字颜色"><svg class="i22"><use href="#colors"/></svg><i class="caret"></i></button>
    <i class="sep"></i>
    <div class="combo c90 muted"><select aria-label="字体"><option>混合</option></select><i class="caret"></i></div>
    <div class="combo c50"><select aria-label="字号"><option>10.4 pt</option></select><i class="caret"></i></div>
    <button class="serif large" aria-label="增大字号">A<svg class="tri"><use href="#tup"/></svg></button>
    <button class="serif small" aria-label="减小字号">A<svg class="tri"><use href="#tdown"/></svg></button>
    <i class="sep"></i>
    <button class="serif bold">B</button>
    <button class="serif italic">I</button>
    <i class="sep"></i>
    <button class="align" aria-label="左对齐"><svg class="i20"><use href="#aleft"/></svg></button>
    <button class="align" aria-label="居中"><svg class="i20"><use href="#acenter"/></svg></button>
    <button class="align" aria-label="右对齐"><svg class="i20"><use href="#aright"/></svg></button>
    <button class="align active" aria-label="两端对齐"><svg class="i20"><use href="#ajust"/></svg></button>
    <i class="sep"></i>
    <button class="prop"><svg class="i22"><use href="#props"/></svg>属性(P)...</button>
    <div class="pulls"><svg class="pull"><use href="#pull"/></svg><svg class="pull"><use href="#pull"/></svg></div>
  </div>

  <div class="tabs">
    <button class="tab">外文教材删第一版<span>×</span></button>
    <button class="tabbtn" aria-label="新标签">✚</button>
    <button class="tabbtn end" aria-label="关闭标签">✖</button>
  </div>

  <main class="work">
    <div class="canvas">
      <article class="page">
        <div class="selection">
          <div class="textbox">
            <p>JPEG (Joint Photographic Experts Group) is a standard used for continuous tone still image</p>
            <p>compression. The file suffix is Jpg or JPEG is the most commonly used image file format. It mainly</p>
            <p>adopts the joint coding methods of predictive coding (DPCM), discrete cosine transform (DCT)</p>
            <p>and entropy coding to remove redundant images and color data. It belongs to the lossy</p>
            <p>compression format, which can compress images in a small storage space, and to a certain extent,</p>
            <p>it will cause damage to image data. In particular, the use of a high compression ratio will reduce</p>
            <p>the quality of the image restored after the final decompression. If high-quality images are sought,</p>
            <p>it is not appropriate to use a high compression ratio. However, JPEG compression technology is</p>
            <p>very advanced. It can remove redundant image data by lossy compression. In other words, it can</p>
            <p>obtain better image quality with less disk space. Moreover, JPEG is a very flexible format with the</p>
            <p>function of adjusting image quality. It allows files to be compressed with different compression</p>
            <p>ratios and supports multiple compression levels. The compression ratio is usually 10; 1 to 40; 1.</p>
            <p>The higher the compression ratio, the lower the image quality; On the contrary, the smaller the</p>
            <p>compression ratio, the higher the image quality. For the same image, the file stored in JPEG</p>
            <p>format is 1 / 10 ~ 1 / 20 of other types of files, usually only a few tens of KB, and the quality loss</p>
            <p>is small, which is basically invisible. JPEG format mainly compresses high-frequency information,</p>
            <p>and retains color information well, so it is suitable for the Internet; It can reduce the image</p>
            <p>transmission time and support 24 bit true color; It is also widely used in images requiring</p>
            <p>continuous tone. JPEG format can be divided into standard JPEG, progressive JPEG and JPEG 2000.</p>
            <p>1. Standard JPEG format; This type can only display images from top to bottom when</p>
            <p>downloading the web page. The full picture of the image can not be seen until all the image data</p>
            <p>are downloaded. 2. Progressive JPEG; When this type is downloaded from the web page, it first</p>
            <p>presents the rough appearance of the image, and then slowly presents the complete content.</p>
            <p>Moreover, the document saved in progressive JPG format is smaller than the document saved in</p>
            <p class="end">standard JPG format. Therefore, if you want to download the image from the web page</p>
            <p>You can use this format more when using images on. 3.JPEG2000； &nbsp; It is a new generation of</p>
            <p>image compression method, with higher compression quality, and can improve the mosaic</p>
            <p>phenomenon and position disorder caused by unstable signal during wireless transmission, and</p>
            <p class="end">improve the transmission quality.</p>
          </div>
          <i class="stem"></i><i class="rot"></i><i class="pivot"></i>
          <i class="h nw"></i><i class="h ne"></i><i class="h sw"></i><i class="h se"></i>
          <i class="h mid n"></i><i class="h mid s"></i><i class="h mid w"></i><i class="h mid e"></i>
        </div>
      </article>
    </div>
    <div class="scroll"><b><i class="caret up"></i></b><div class="track"><div class="thumb"></div></div><b><i class="caret"></i></b></div>
    <div class="callout">
      <svg viewBox="0 0 14 98"><path d="M7 0 14 13H10.500L8 98H6.500L3.500 13H0z" fill="#fcb90a"/></svg>
      <span>编辑工具选择</span>
    </div>
  </main>

  <footer class="status">
    <div class="left">
      <button class="opts"><svg class="i24"><use href="#gears"/></svg>选项...<i class="caret"></i></button>
      <i class="sep"></i>
      <svg class="i16"><use href="#whsize"/></svg>
      <dl><dt>W:</dt><dd>210.0mm</dd><dt>H:</dt><dd>297.0mm</dd></dl>
      <i class="sep"></i>
      <svg class="i16"><use href="#cross"/></svg>
      <dl class="xy"><dt>X :</dt><dd>58.2mm</dd><dt>Y :</dt><dd>74.8mm</dd></dl>
    </div>
    <div class="center">
      <button aria-label="首页"><svg class="i22"><use href="#first"/></svg></button>
      <button aria-label="上一页"><svg class="i22"><use href="#prev"/></svg></button>
      <input type="text" value="1/1" aria-label="页码">
      <button aria-label="下一页"><svg class="i22"><use href="#next"/></svg></button>
      <button aria-label="末页"><svg class="i22"><use href="#last"/></svg></button>
      <i class="sep"></i>
      <button aria-label="后退视图"><svg class="i22"><use href="#goback"/></svg></button>
      <button aria-label="前进视图"><svg class="i22"><use href="#gofwd"/></svg></button>
    </div>
    <div class="right">
      <button aria-label="单页"><svg class="i20"><use href="#single"/></svg></button>
      <button class="active" aria-label="连续"><svg class="i20"><use href="#cont"/></svg></button>
      <button aria-label="双页"><svg class="i24"><use href="#facing"/></svg></button>
      <button aria-label="连续双页"><svg class="i24"><use href="#contfacing"/></svg></button>
      <div class="combo c76"><select aria-label="缩放比例"><option>75%</option></select><i class="caret"></i></div>
      <i class="sep"></i>
      <button aria-label="缩小"><svg class="i22"><use href="#minus"/></svg></button>
      <input type="range" min="0" max="100" value="38" aria-label="缩放滑块">
      <button aria-label="放大"><svg class="i22"><use href="#plus"/></svg></button>
      <button class="full" aria-label="全屏"><svg class="i16"><use href="#screen"/></svg><i class="caret dim"></i></button>
      <svg class="pull flip-v"><use href="#pull"/></svg>
    </div>
  </footer>
  <div class="highlight"></div>
</div>
<div class="under"></div>
</body>
</html>
```
FILE: styles.css
```css
* { box-sizing: border-box; }
html, body { margin: 0; }
body {
  min-height: 100vh;
  display: flex;
  flex-direction: column;
  background: #ebebee;
  color: #1c1c1c;
  font: 11px/14px "Open Sans", "Noto Sans CJK SC", sans-serif;
}
button, select, input { font: inherit; color: inherit; }
button {
  display: flex;
  align-items: center;
  padding: 0;
  border: 0;
  background: none;
  white-space: nowrap;
}
svg { flex: none; display: block; }
.sprite { position: absolute; width: 0; height: 0; }
.i14 { width: 14px; height: 14px; }
.i16 { width: 16px; height: 16px; }
.i20 { width: 20px; height: 20px; }
.i22 { width: 22px; height: 22px; }
.i24 { width: 24px; height: 22px; }
.i44 { width: 44px; height: 44px; }
.i46 { width: 46px; height: 44px; }
.flip { transform: scaleX(-1); }
.flip-v { transform: scaleY(-1); }
.ratio { font-size: 14px; fill: #3996e8; }
.caret {
  flex: none;
  width: 6px;
  height: 3px;
  background: #555;
  clip-path: polygon(0 0, 100% 0, 50% 100%);
}
.caret.dim { background: #aaa; }
.caret.up { transform: scaleY(-1); }
.corner {
  flex: none;
  display: inline-block;
  width: 4px;
  height: 4px;
  background: #222;
  clip-path: polygon(100% 0, 100% 100%, 0 100%);
}
.sep { flex: none; width: 1px; align-self: stretch; background: #d0d3d3; }
.pull { width: 8px; height: 6px; }
.active {
  border: 1px solid #8b7334;
  border-radius: 2px;
  background: linear-gradient(#e6d6a4, #fbe49b 60%, #f9d669);
}

.titlebar {
  display: flex;
  align-items: center;
  height: 32px;
  margin-right: 2px;
  padding: 0 6px 0 5px;
  background: #20242d;
  color: #f2f2f2;
}
.titlebar h1 { margin: 0 auto 0 8px; font-size: 13px; line-height: 20px; font-weight: 400; }
.account, .winctl { display: flex; }
.account { gap: 15px; }
.account button { gap: 7px; }
.account .menu { margin-left: 6px; }
.winctl { gap: 12px; margin-left: 30px; }

.window {
  position: relative;
  flex: 1;
  display: flex;
  flex-direction: column;
  margin: 0 5px 0 6px;
  background: #f6f7f7;
}
.menubar {
  display: flex;
  align-items: center;
  height: 29px;
  padding: 0 0 0 8px;
  gap: 18px;
  border-bottom: 1px solid #d6d8d8;
}
.menubar > .pull, .ribbon > .pull { align-self: flex-start; margin-top: 3px; }
.ribbon > .pull { margin-left: auto; }
.finders { display: flex; gap: 5px; margin: 0 -12px 0 auto; }
.finders button { gap: 3px; }

.ribbon { display: flex; height: 80px; border-bottom: 1px solid #d6d8d8; }
.ribbon > * { flex: none; }
.big { flex-direction: column; padding-top: 2px; gap: 4px; }
.big.active { padding-top: 1px; }
.w28 { width: 28px; }
.w32 { width: 32px; }
.w48 { width: 48px; }
.w54 { width: 54px; }
.w58 { width: 58px; }
.w70 { width: 70px; }
.w78 { width: 78px; padding-left: 2px; }
.cells { display: grid; grid-template-rows: repeat(3, 26px); padding-top: 1px; }
.cells button { gap: 4px; }
.quick { grid-template-columns: 36px 40px 36px 26px; padding-left: 5px; }
.quick .caret { margin-left: 2px; }
.quick .span2 { grid-column: span 2; }
.one.w32 { justify-items: center; }
.w58 button { gap: 2px; }
.w58 .corner { align-self: flex-end; margin-bottom: 7px; }
.zoomers { grid-template-columns: 24px 80px 37px; align-items: center; padding-left: 4px; }
.two { grid-template-columns: 26px 27px; }

.combo {
  display: flex;
  align-items: center;
  height: 23px;
  padding: 0 4px 0 2px;
  border: 1px solid #a2a5a7;
  border-radius: 3px;
  background: #fff;
}
.combo select {
  appearance: none;
  flex: 1;
  min-width: 0;
  width: 0;
  padding: 0 0 0 2px;
  border: 0;
  background: none;
  outline: 0;
}
.combo .caret { width: 8px; height: 4px; }
.combo.muted select { color: #999; }
.zoomers .combo { width: 76px; }
.c50 { width: 50px; }
.c70 { width: 70px; }
.c76 { width: 76px; }
.c90 { width: 90px; }

.formatbar {
  display: flex;
  align-items: center;
  height: 31px;
  padding-left: 5px;
  border-bottom: 1px solid #8e8e8e;
}
.formatbar > * { flex: none; }
.formatbar .combo { margin-right: 3px; }
.formatbar .sep { height: 24px; align-self: center; margin-right: 4px; }
.swatch { width: 33px; gap: 6px; }
.swatch b { width: 18px; height: 21px; background: #000; }
.pick { gap: 3px; width: 37px; }
.serif {
  height: 24px;
  font-family: "Liberation Serif", "Noto Sans CJK SC", serif;
  color: #555;
}
.serif .tri { width: 7px; height: 5px; align-self: flex-start; margin-top: 4px; }
.serif.large { width: 29px; font-size: 22px; }
.serif.small { width: 26px; font-size: 16px; }
.serif.bold { width: 26px; padding-left: 4px; font-size: 22px; font-weight: 700; }
.serif.italic { width: 26px; padding-left: 4px; font-size: 22px; font-style: italic; }
.align { width: 26px; height: 26px; justify-content: center; }
.align.active { margin-right: 3px; }
.prop { gap: 3px; }
.pulls { margin-left: auto; height: 26px; display: flex; flex-direction: column; justify-content: space-between; }

.tabs {
  display: flex;
  height: 24px;
  padding-top: 2px;
  border-bottom: 1px solid #f3ef9a;
  background: linear-gradient(#858585, #6c6c6c);
}
.tab {
  width: 118px;
  padding-left: 5px;
  justify-content: space-between;
  background: linear-gradient(#fbe9ab, #fbd877);
}
.tab span { margin-right: 5px; font-size: 9px; line-height: 9px; }
.tabbtn {
  width: 19px;
  justify-content: center;
  border-right: 1px solid #4d4d4d;
  background: #5d5d5d;
  color: #fff;
  font-family: "DejaVu Sans", sans-serif;
  font-size: 12px;
}
.tabbtn.end { margin-left: auto; }

.work {
  position: relative;
  flex: 1;
  display: flex;
  border: 1px solid #ecdf92;
  border-width: 0 1px;
}
.canvas {
  flex: 1;
  display: flex;
  justify-content: center;
  padding-right: 2px;
  overflow: hidden;
  border: 1px solid #555;
  background: #afafaf;
  box-shadow: inset 2px 2px 2px #888;
}
.page {
  width: 556px;
  padding: 20px 75px 0 78px;
  background: #fff;
  box-shadow: 0 0 7px 1px #222;
}
.selection {
  position: relative;
  padding: 4px;
  background:
    repeating-linear-gradient(90deg, #555 0 2px, transparent 2px 4px) 0 0 / 100% 1px no-repeat,
    repeating-linear-gradient(90deg, #555 0 2px, transparent 2px 4px) 0 100% / 100% 1px no-repeat,
    repeating-linear-gradient(#555 0 2px, transparent 2px 4px) 0 0 / 1px 100% no-repeat,
    repeating-linear-gradient(#555 0 2px, transparent 2px 4px) 100% 0 / 1px 100% no-repeat;
}
.textbox {
  display: grid;
  grid-template-columns: minmax(0, 1fr);
  grid-auto-rows: 1fr;
  min-height: 427px;
  padding: 1px 3px 0 1px;
  border: 2px solid #4a88c8;
  font: 9px/14px Lato, "Noto Sans CJK SC", sans-serif;
  font-variant-ligatures: none;
  color: #111;
}
.textbox p { margin: 0; white-space: nowrap; text-align: justify; text-align-last: justify; }
.textbox .end { text-align-last: left; }
.h {
  position: absolute;
  width: 11px;
  height: 11px;
  border: 1px solid #222;
  border-radius: 2px;
  background: linear-gradient(135deg, #fff3cf, #f7d684);
  transform: translate(-50%, -50%);
}
.h.mid { width: 9px; height: 9px; }
.nw, .n, .ne { top: 0; }
.sw, .s, .se { top: 100%; }
.w, .e { top: 50%; }
.nw, .w, .sw { left: 0; }
.n, .s { left: 50%; }
.ne, .e, .se { left: 100%; }
.stem { position: absolute; left: 50%; top: -20px; height: 20px; border-left: 1px dashed #555; }
.rot, .pivot { position: absolute; left: 50%; border-radius: 50%; transform: translate(-50%, -50%); }
.rot { top: -20px; width: 10px; height: 10px; border: 1px solid #222; background: #4fb04a; }
.pivot { top: 50%; width: 13px; height: 13px; border: 1px solid #777; }

.scroll { width: 14px; display: flex; flex-direction: column; background: #f4f4f8; }
.scroll b { display: flex; height: 14px; align-items: center; justify-content: center; background: #fff; }
.scroll .track {
  flex: 1;
  padding: 28px 1px 0;
  background: linear-gradient(90deg, #dcdce2, #c2c2c8 60%, #dcdce2);
}
.scroll .thumb {
  height: 70%;
  border: 1px solid #8c8c8c;
  border-width: 1px 0;
  background: linear-gradient(#777 0 1px, transparent 1px 2px, #777 2px 3px, transparent 3px 4px, #777 4px 5px) 50% 50% / 6px 5px no-repeat #f2f2f8;
}
.callout {
  position: absolute;
  left: 205px;
  top: -10px;
  display: flex;
  flex-direction: column;
  align-items: center;
  color: #fcb90a;
  font-size: 30px;
  line-height: 36px;
  white-space: nowrap;
}
.callout svg { width: 14px; height: 98px; margin-right: -98px; }

.status {
  display: grid;
  grid-template-columns: 1fr auto 1fr;
  height: 31px;
  padding-top: 1px;
  align-items: center;
  border: 1px solid #f0e3ae;
  border-width: 0 1px 2px;
  background: #f7f8f7;
}
.status > div { display: flex; align-items: center; }
.status .sep { height: 26px; align-self: center; margin: 0 5px; }
.status .left { padding-left: 2px; }
.left .opts { gap: 2px; }
.left .caret { margin-left: 5px; }
.status .left .sep { margin: 0 3px; }
.status dl {
  display: grid;
  grid-template-columns: auto auto;
  column-gap: 3px;
  margin: 0;
  line-height: 12px;
}
.status dd { margin: 0; }
.status .xy { column-gap: 9px; margin-left: 1px; }
.center { gap: 4px; padding-right: 12px; }
.status .center .sep { margin: 0; }
.center input {
  width: 84px;
  height: 23px;
  padding: 0 3px;
  border: 1px solid #b0b2b2;
  border-radius: 3px;
  background: #fff;
  color: #666;
  font-size: 12px;
  text-align: right;
}
.right { justify-content: flex-end; gap: 3px; }
.right .active { width: 26px; height: 26px; justify-content: center; }
.status .right .sep { margin: 0 1px 0 0; }
.right .full { gap: 11px; margin: 0 2px 0 3px; }
.right .pull { align-self: flex-start; }
.right input {
  appearance: none;
  width: 94px;
  height: 22px;
  margin: 0 2px;
  background: linear-gradient(#888, #888) 50% 50% / 100% 1px no-repeat;
}
.right input::-webkit-slider-thumb {
  appearance: none;
  width: 6px;
  height: 22px;
  border: 1px solid #777;
  border-radius: 2px;
  background: #fff;
}
.highlight {
  position: absolute;
  left: 3px;
  top: 104px;
  width: 732px;
  height: 43px;
  border: 5px solid #fcb90a;
  border-radius: 4px;
  pointer-events: none;
}
.under {
  height: 5px;
  background: linear-gradient(#8ca8e8, #8ca8e8) 335px 3px / 333px 2px no-repeat;
}
```
